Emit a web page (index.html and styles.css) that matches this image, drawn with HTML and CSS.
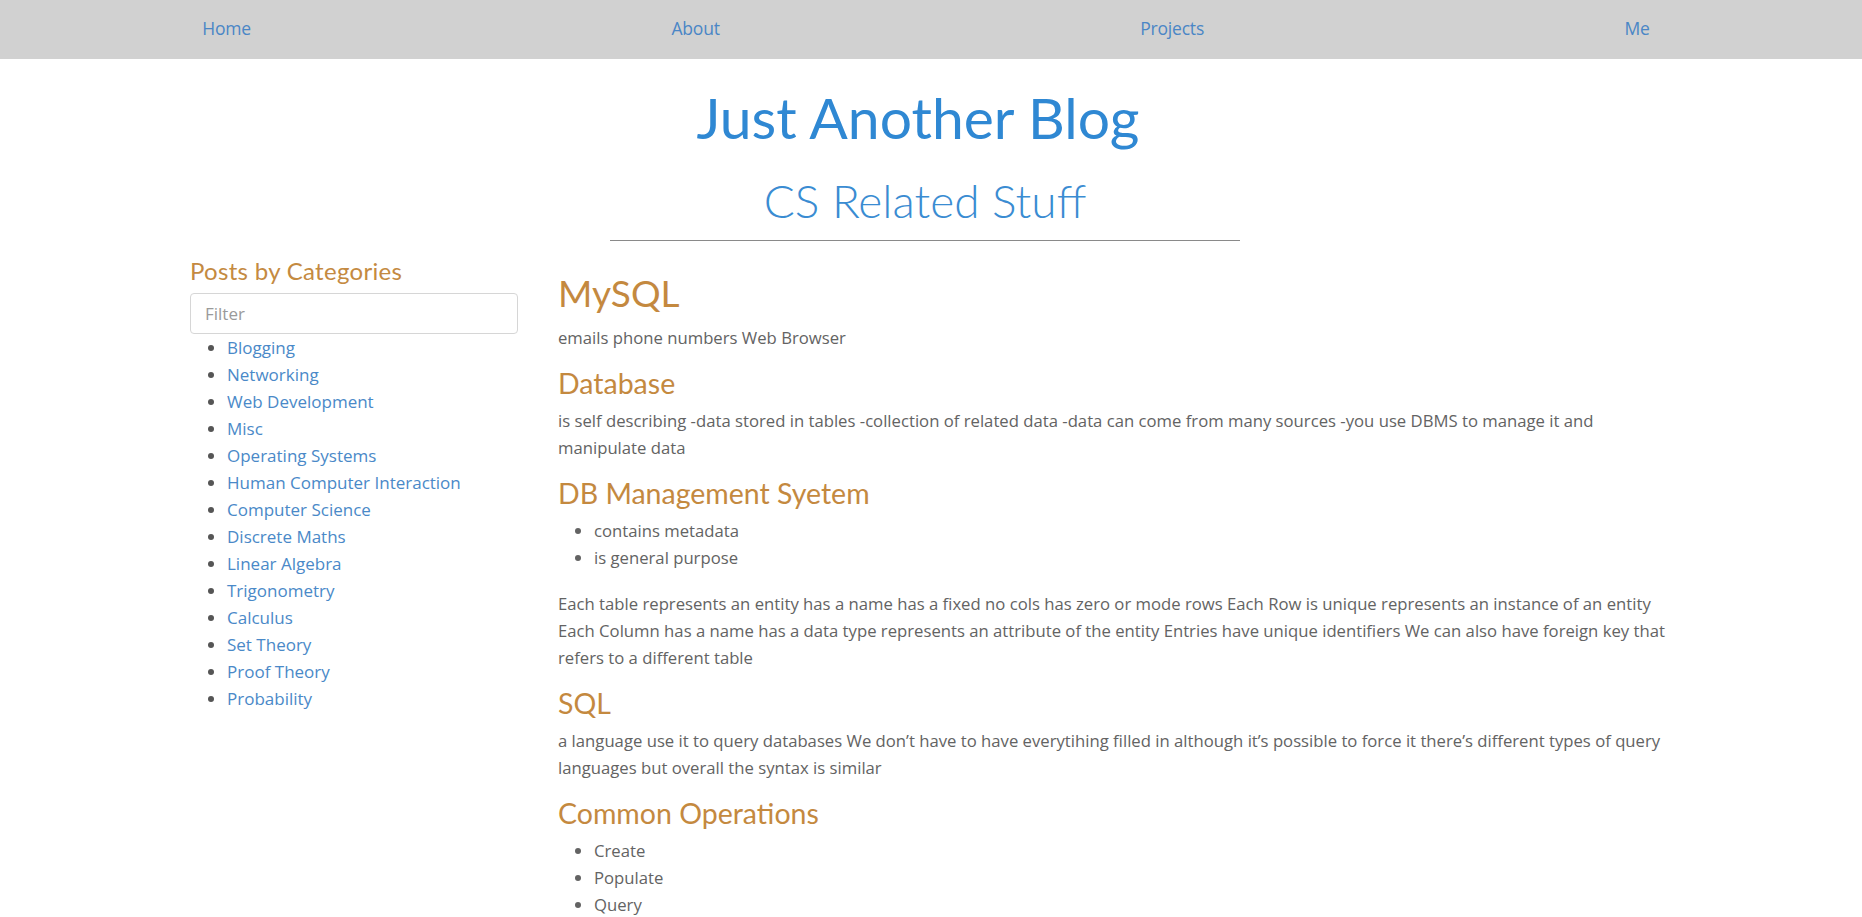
FILE: index.html
```html
<!DOCTYPE html>
<html lang="en">
<head>
<meta charset="utf-8">
<title>Just Another Blog</title>
<link rel="stylesheet" href="styles.css">
</head>
<body>
<nav class="topnav">
  <div class="navlinks">
    <a href="#">Home</a>
    <a href="#">About</a>
    <a href="#">Projects</a>
    <a href="#">Me</a>
  </div>
</nav>
<header class="masthead">
  <h1 class="site-title">Just Another Blog</h1>
  <h2 class="site-subtitle">CS Related Stuff</h2>
  <hr class="rule">
</header>
<div class="main">
  <aside class="sidebar">
    <h3 class="side-title">Posts by Categories</h3>
    <input class="filter" type="text" placeholder="Filter">
    <ul class="cats">
      <li><a href="#">Blogging</a></li>
      <li><a href="#">Networking</a></li>
      <li><a href="#">Web Development</a></li>
      <li><a href="#">Misc</a></li>
      <li><a href="#">Operating Systems</a></li>
      <li><a href="#">Human Computer Interaction</a></li>
      <li><a href="#">Computer Science</a></li>
      <li><a href="#">Discrete Maths</a></li>
      <li><a href="#">Linear Algebra</a></li>
      <li><a href="#">Trigonometry</a></li>
      <li><a href="#">Calculus</a></li>
      <li><a href="#">Set Theory</a></li>
      <li><a href="#">Proof Theory</a></li>
      <li><a href="#">Probability</a></li>
    </ul>
  </aside>
  <article class="post">
    <h1 class="post-title">MySQL</h1>
    <p>emails phone numbers Web Browser</p>
    <h2 class="sec">Database</h2>
    <p>is self describing -data stored in tables -collection of related data -data can come from many sources -you use DBMS to manage it and manipulate data</p>
    <h2 class="sec">DB Management Syetem</h2>
    <ul class="plist">
      <li>contains metadata</li>
      <li>is general purpose</li>
    </ul>
    <p class="gap">Each table represents an entity has a name has a fixed no cols has zero or mode rows Each Row is unique represents an instance of an entity Each Column has a name has a data type represents an attribute of the entity Entries have unique identifiers We can also have foreign key that refers to a different table</p>
    <h2 class="sec">SQL</h2>
    <p>a language use it to query databases We don’t have to have everytihing filled in although it’s possible to force it there’s different types of query languages but overall the syntax is similar</p>
    <h2 class="sec">Common Operations</h2>
    <ul class="plist">
      <li>Create</li>
      <li>Populate</li>
      <li>Query</li>
    </ul>
  </article>
</div>
</body>
</html>
```
FILE: styles.css
```css
html, body {
  margin: 0;
  padding: 0;
  background: #ffffff;
}
body {
  font-family: "Open Sans", "Noto Sans", sans-serif;
  font-size: 16.7px;
  color: #636363;
}
a {
  color: #4a89c8;
  text-decoration: none;
}
.topnav {
  height: 59px;
  background: #d1d1d1;
}
.navlinks {
  height: 100%;
  display: flex;
  justify-content: space-around;
  align-items: center;
  margin: 0 2px 0 -8px;
}
.navlinks a {
  font-family: "Open Sans", sans-serif;
  font-size: 17.5px;
  color: #4a86c6;
  letter-spacing: -0.2px;
  margin-top: -3px;
}
.masthead {
  text-align: center;
  padding-top: 26px;
  padding-right: 12px;
}
.site-title {
  font-family: Lato, sans-serif;
  font-weight: 400;
  font-size: 57px;
  line-height: 64px;
  color: #2f88d3;
  margin: 0;
  text-indent: -14px;
}
.site-subtitle {
  font-family: Lato, sans-serif;
  font-weight: 300;
  font-size: 46px;
  line-height: 48px;
  color: #3a8cd2;
  margin: 28px 0 0 0;
}
.rule {
  width: 630px;
  margin: 15px auto 0;
  border: 0;
  border-top: 1px solid #8a8a8a;
  height: 0;
}
.main {
  display: flex;
  align-items: flex-start;
  padding-left: 190px;
  gap: 40px;
}
.sidebar {
  width: 328px;
  flex: none;
}
.side-title {
  font-family: Lato, sans-serif;
  font-weight: 400;
  font-size: 24px;
  line-height: 30px;
  letter-spacing: 0.3px;
  color: #c48a41;
  margin: 15px 0 7px;
}
.filter {
  display: block;
  box-sizing: border-box;
  width: 328px;
  height: 41px;
  border: 1px solid #d6d6d6;
  border-radius: 4px;
  padding: 0 14px;
  font-family: "Open Sans", sans-serif;
  font-size: 17px;
  color: #555;
  outline: none;
}
.filter::placeholder {
  color: #9a9a9a;
}
.cats {
  margin: 0;
  padding-left: 37px;
  font-size: 17px;
  line-height: 27px;
  color: #555;
}
.post {
  width: 1127px;
  flex: none;
}
.post p {
  margin: 0 0 10px;
  line-height: 27px;
}
.post .gap {
  margin-top: 19px;
}
.post-title {
  font-family: Lato, sans-serif;
  font-weight: 400;
  font-size: 37px;
  line-height: 44px;
  color: #c4893f;
  margin: 30px 0 9px;
}
.sec {
  font-family: Lato, sans-serif;
  font-weight: 400;
  font-size: 28.5px;
  line-height: 32px;
  color: #c4893f;
  margin: 16px 0 8px;
}
.plist {
  margin: 0 0 10px;
  padding-left: 36px;
  line-height: 27px;
}
```
